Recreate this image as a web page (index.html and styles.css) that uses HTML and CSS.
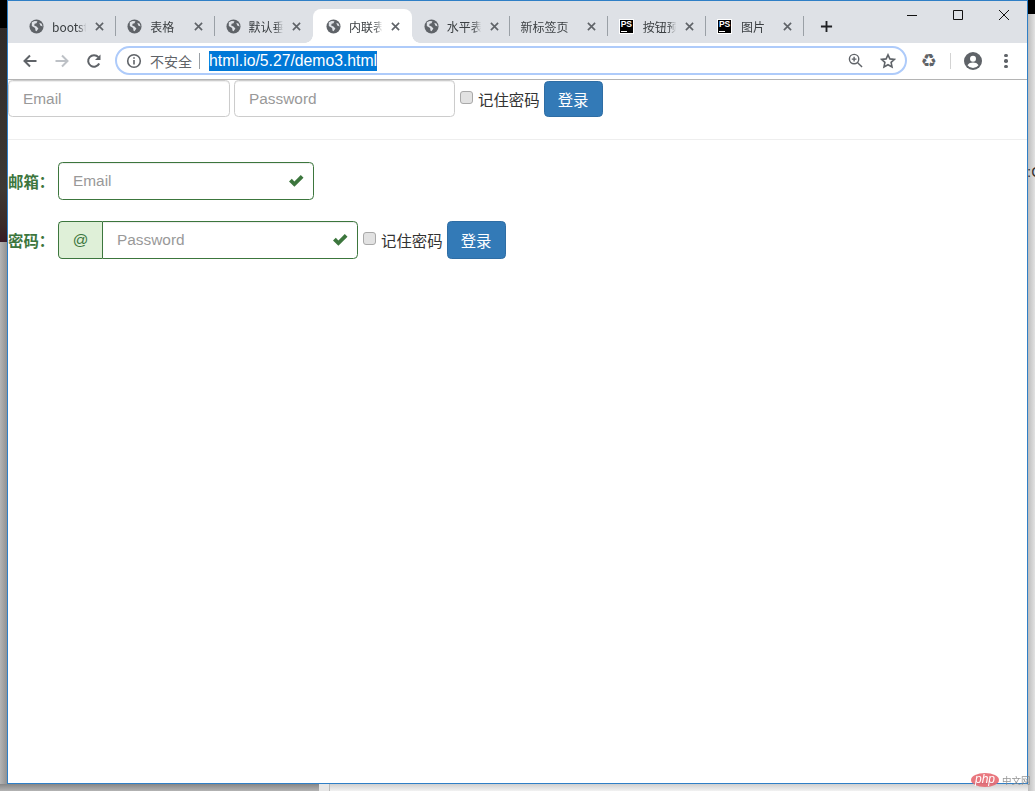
FILE: index.html
```html
<!DOCTYPE html>
<html lang="zh">
<head>
<meta charset="utf-8">
<title>内联表单</title>
<link rel="stylesheet" href="styles.css">
</head>
<body>
<div class="desktop">
  <div class="bg-left"><div class="bg-black"></div><div class="bg-brown"></div><div class="bg-grey"></div></div>
  <div class="bg-bottom"><div class="bb-dark"></div><div class="bb-line"></div><div class="bb-light"></div></div>
  <div class="bg-right"><div class="bg-right-top"></div><span class="bg-text">:C</span></div>
  <div class="window">
    <header class="tabstrip">
      <div class="tab"><svg class="fav" viewBox="0 0 16 16"><use href="#globe"/></svg><span class="tab-title">bootstrap</span><span class="tab-x"><svg viewBox="0 0 10 10"><use href="#x"/></svg></span></div>
      <i class="sep"></i>
      <div class="tab"><svg class="fav" viewBox="0 0 16 16"><use href="#globe"/></svg><span class="tab-title">表格</span><span class="tab-x"><svg viewBox="0 0 10 10"><use href="#x"/></svg></span></div>
      <i class="sep"></i>
      <div class="tab"><svg class="fav" viewBox="0 0 16 16"><use href="#globe"/></svg><span class="tab-title">默认垂直表单</span><span class="tab-x"><svg viewBox="0 0 10 10"><use href="#x"/></svg></span></div>
      <i class="sep hidden"></i>
      <div class="tab active"><svg class="fav" viewBox="0 0 16 16"><use href="#globe"/></svg><span class="tab-title">内联表单</span><span class="tab-x"><svg viewBox="0 0 10 10"><use href="#x"/></svg></span></div>
      <i class="sep hidden"></i>
      <div class="tab shift"><svg class="fav" viewBox="0 0 16 16"><use href="#globe"/></svg><span class="tab-title">水平表单</span><span class="tab-x"><svg viewBox="0 0 10 10"><use href="#x"/></svg></span></div>
      <i class="sep"></i>
      <div class="tab"><span class="tab-title">新标签页</span><span class="tab-x"><svg viewBox="0 0 10 10"><use href="#x"/></svg></span></div>
      <i class="sep"></i>
      <div class="tab"><span class="ps"><b>PS</b><u></u></span><span class="tab-title">按钮预览</span><span class="tab-x"><svg viewBox="0 0 10 10"><use href="#x"/></svg></span></div>
      <i class="sep"></i>
      <div class="tab"><span class="ps"><b>PS</b><u></u></span><span class="tab-title">图片</span><span class="tab-x"><svg viewBox="0 0 10 10"><use href="#x"/></svg></span></div>
      <i class="sep"></i>
      <svg class="newtab" viewBox="0 0 14 14"><path d="M7 1v12M1 7h12"/></svg>
      <div class="winbtns">
        <svg viewBox="0 0 12 12"><path d="M1 6.500h10"/></svg>
        <svg viewBox="0 0 12 12"><path d="M1.500 1.500h9v9h-9z"/></svg>
        <svg viewBox="0 0 12 12"><path d="M1 1l10 10M11 1L1 11"/></svg>
      </div>
    </header>
    <nav class="toolbar">
      <svg class="nav-ic" viewBox="0 0 16 16"><path d="M14.500 8H2.500M8 2.500L2.500 8 8 13.500"/></svg>
      <svg class="nav-ic off" viewBox="0 0 16 16"><path d="M1.500 8h12M8 2.500L13.500 8 8 13.500"/></svg>
      <svg class="nav-ic" viewBox="0 0 16 16"><path d="M13.200 10.500A5.800 5.800 0 1 1 12.400 4.200"/><path class="solid" d="M14.500 1.500v5.500H9z"/></svg>
      <div class="omnibox">
        <svg class="info" viewBox="0 0 16 16"><circle cx="8" cy="8" r="6.300"/><path d="M8 7v4.500M8 4.300v1.500"/></svg>
        <span class="insecure">不安全</span>
        <i class="omni-sep"></i>
        <span class="url">html.io/5.27/demo3.html</span>
        <svg class="zoom-ic" viewBox="0 0 16 16"><circle cx="6.500" cy="6.500" r="5"/><path d="M10.300 10.300L15 15M6.500 4v5M4 6.500h5"/></svg>
        <svg class="star" viewBox="0 0 16 16"><path d="M8 1.800l1.900 4.100 4.500.5-3.300 3 .9 4.500L8 11.700l-4 2.200.9-4.500-3.300-3 4.500-.5z"/></svg>
      </div>
      <span class="recycle">♻</span>
      <i class="tool-sep"></i>
      <svg class="avatar" viewBox="0 0 18 18"><circle class="solid" cx="9" cy="9" r="9"/><circle class="cut" cx="9" cy="6.800" r="3"/><path class="cut" d="M3.500 13.200c1-2 3.400-2.700 5.500-2.700s4.500.7 5.500 2.700A7 7 0 0 1 9 16a7 7 0 0 1-5.500-2.800z"/></svg>
      <span class="dots"><i></i><i></i><i></i></span>
    </nav>
    <main class="page">
      <form class="form-inline">
        <input class="control c-email" type="text" placeholder="Email">
        <input class="control c-pass" type="password" placeholder="Password">
        <label class="check"><input type="checkbox"><span>记住密码</span></label>
        <button class="btn" type="button">登录</button>
      </form>
      <hr class="rule">
      <form class="stacked">
        <div class="row">
          <label class="lbl">邮箱：</label>
          <div class="fb ok-email">
            <input class="control ok" type="text" placeholder="Email">
            <svg class="tick" viewBox="0 0 16 14"><path d="M1 7.500l2.800-2.700 2.600 2.600L12.800 1 15.500 3.700 6.400 12.800z"/></svg>
          </div>
        </div>
        <div class="row">
          <label class="lbl">密码：</label>
          <div class="fb group">
            <span class="addon">@</span>
            <input class="control ok joined" type="password" placeholder="Password">
            <svg class="tick" viewBox="0 0 16 14"><path d="M1 7.500l2.800-2.700 2.600 2.600L12.800 1 15.500 3.700 6.400 12.800z"/></svg>
          </div>
          <label class="check"><input type="checkbox"><span>记住密码</span></label>
          <button class="btn tall" type="button">登录</button>
        </div>
      </form>
    </main>
  </div>
  <div class="watermark"><span class="php">php</span><span class="cn">中文网</span></div>
</div>
<svg class="defs" aria-hidden="true">
  <symbol id="globe" viewBox="0 0 16 16"><circle cx="8" cy="8" r="7.500" fill="#5f6368"/><path fill="#dee1e6" d="M3 3.500l3-1.500 3 .5-1 2-2 .5-.5 2 2.500 1 2 2-2 3-1-.5-.5-3L3 7.500zM11 4l2.500 1 1 3-2.500-1z"/></symbol>
  <symbol id="x" viewBox="0 0 10 10"><path d="M1 1l8 8M9 1L1 9" stroke="#5f6368" stroke-width="1.800" fill="none"/></symbol>
</svg>
</body>
</html>
```
FILE: styles.css
```css
* { box-sizing: border-box; }
html, body { margin: 0; padding: 0; width: 1035px; height: 791px; overflow: hidden; background: #e9e9e9; }
body { font-family: "Liberation Sans", "Noto Sans CJK SC", sans-serif; color: #333; }
.defs { width: 0; height: 0; position: absolute; }
.desktop { position: relative; width: 1035px; height: 791px; overflow: hidden; background: #ececec; }

.bg-left { position: absolute; left: 0; top: 0; width: 8px; height: 791px; display: flex; flex-direction: column; }
.bg-black { height: 28px; background: #000; }
.bg-brown { height: 214px; background: linear-gradient(#302b29, #3d3833 75%, #3a2a28 92%, #3a1a26); }
.bg-grey { flex: 1; background: linear-gradient(90deg, #b4b4b4, #8c8c8c); }
.bg-bottom { position: absolute; left: 0; top: 784px; width: 1035px; height: 7px; display: flex; }
.bb-dark { width: 319px; background: linear-gradient(#868686, #b4b4b4); }
.bb-line { width: 11px; background: #e6e6e6; border-right: 1px solid #bbb; }
.bb-light { flex: 1; background: linear-gradient(#cfcfcf, #f2f2f2); }
.bg-right { position: absolute; left: 1028px; top: 0; width: 7px; height: 791px; background: linear-gradient(90deg, #bdbdbd, #e2e2e2); }
.bg-right-top { height: 14px; background: #000; }
.bg-text { position: absolute; left: -1px; top: 163px; font-size: 15px; color: #333; }

.window { position: absolute; left: 7px; top: 0; width: 1021px; height: 784px; border: 1px solid #2f7fc6; background: #fff; display: flex; flex-direction: column; }

.tabstrip { height: 42px; flex: none; background: #dee1e6; display: flex; align-items: center; padding: 8px 0 0 11px; position: relative; }
.tab { width: 95.300px; height: 34px; flex: none; display: flex; align-items: center; padding: 0 10px; font-size: 12px; color: #3c4043; font-family: "Noto Sans CJK SC", "Liberation Sans", sans-serif; position: relative; }
.tab.active { background: #fff; width: 98.700px; margin: 0 -2.800px 0 -0.600px; padding: 0 12px 0 12.700px; border-radius: 8px 8px 0 0; }
.tab.active::before, .tab.active::after { content: ""; position: absolute; bottom: 0; width: 8px; height: 8px; }
.tab.active::before { left: -8px; background: radial-gradient(circle at 0 0, #dee1e6 7.500px, #fff 8px); }
.tab.active::after { right: -8px; background: radial-gradient(circle at 100% 0, #dee1e6 7.500px, #fff 8px); }
.tab.shift { padding: 0 8.500px 0 11.500px; margin-right: .2px; }
.tab.shift + .sep + .tab { margin-left: -.2px; }
.fav { width: 15px; height: 15px; flex: none; margin-right: 8px; }
.ps { width: 15px; height: 15px; flex: none; margin-right: 9px; background: #000; border: 1px solid #fff; color: #fff; position: relative; display: block; overflow: hidden; }
.ps b { position: absolute; left: 1px; top: 0; font: bold 8.500px/9px "Liberation Sans", sans-serif; letter-spacing: -.3px; }
.ps u { position: absolute; left: 1px; bottom: 1px; width: 6px; height: 1px; background: #fff; }
.tab-title { flex: 1; min-width: 0; white-space: nowrap; overflow: hidden; -webkit-mask-image: linear-gradient(90deg, #000 75%, transparent 98%); mask-image: linear-gradient(90deg, #000 75%, transparent 98%); }
.tab-x { width: 9px; height: 9px; flex: none; margin-left: 8px; display: block; }
.tab-x svg { display: block; width: 9px; height: 9px; }
.sep { width: 1px; height: 20px; flex: none; margin: 0 1px; background: #9aa0a6; display: block; }
.sep.hidden { background: transparent; }
.newtab { width: 13px; height: 13px; flex: none; margin-left: 15px; fill: none; stroke: #202124; stroke-width: 2; }
.winbtns { position: absolute; right: 0; top: 0; display: flex; }
.winbtns svg { width: 46px; height: 29px; padding: 8px 17px 9px; fill: none; stroke: #111; stroke-width: 1; overflow: visible; }

.toolbar { height: 37px; flex: none; background: #fff; border-bottom: 1px solid #b4b4b4; display: flex; align-items: center; padding: 0 0 1px 14px; }
.nav-ic { width: 16px; height: 16px; flex: none; margin: 1px 16px 0 0; fill: none; stroke: #5f6368; stroke-width: 2; }
.nav-ic.off { stroke: #bdc1c6; }
.nav-ic:nth-child(3) { margin-right: 13px; }
.nav-ic .solid { fill: #5f6368; stroke: none; }
.omnibox { width: 792px; height: 29px; flex: none; border: 2px solid #aecbfa; border-radius: 15px; display: flex; align-items: center; padding: 0 9px; background: #fff; font-family: "Noto Sans CJK SC", "Liberation Sans", sans-serif; }
.info { width: 16px; height: 16px; flex: none; fill: none; stroke: #5f6368; stroke-width: 1.600; margin-right: 8px; }
.insecure { font-size: 14px; color: #5f6368; white-space: nowrap; }
.omni-sep { width: 1px; height: 16px; flex: none; background: #9aa0a6; margin: 0 9px 0 7px; }
.url { font: 15.750px/20px "Liberation Sans", sans-serif; background: #0078d7; color: #fff; white-space: nowrap; margin-top: 1px; }
.zoom-ic { width: 15px; height: 15px; flex: none; margin-left: auto; fill: none; stroke: #5f6368; stroke-width: 1.500; }
.star { width: 16px; height: 16px; flex: none; margin-left: 17px; fill: none; stroke: #5f6368; stroke-width: 1.600; }
.recycle { width: 17px; height: 18px; flex: none; margin: 1px 0 0 13px; display: flex; align-items: center; justify-content: center; font: 18px/18px "DejaVu Sans", sans-serif; color: #5f6368; }
.tool-sep { width: 1px; height: 16px; flex: none; background: #d3d3d3; margin: 1px 13px 0; }
.avatar { width: 18px; height: 18px; flex: none; margin-top: 1px; }
.avatar .solid { fill: #5f6368; }
.avatar .cut { fill: #fff; }
.dots { display: flex; flex-direction: column; gap: 2px; margin: 1px 0 0 22px; flex: none; }
.dots i { width: 3.500px; height: 3.500px; border-radius: 50%; background: #5f6368; display: block; }

.page { flex: 1; background: #fff; font-size: 15.400px; line-height: 22px; overflow: hidden; }
.form-inline { display: flex; align-items: center; }
.control { height: 37.400px; padding: 6.600px 13.200px 6.600px 14px; font: 15.400px/22px "Liberation Sans", sans-serif; color: #555; background: #fff; border: 1px solid #ccc; border-radius: 4.400px; box-shadow: inset 0 1px 1px rgba(0,0,0,.075); outline: 0; }
.control::placeholder { color: #999; opacity: 1; }
.c-email { width: 222px; margin-right: 4px; }
.c-pass { width: 221px; }
.check { display: flex; align-items: center; margin: 0 4px 0 5px; white-space: nowrap; font-family: "Noto Sans CJK SC", "Liberation Sans", sans-serif; font-size: 15.400px; line-height: 22px; }
.check input { appearance: none; -webkit-appearance: none; width: 13px; height: 13px; margin: 0 5px 3px 0; flex: none; background: #e2e2e2; border: 1px solid #a9a9a9; border-radius: 3px; }
.btn { height: 36.400px; width: 59px; padding: 0; align-self: flex-end; font: 15.400px/22px "Noto Sans CJK SC", "Liberation Sans", sans-serif; color: #fff; background: #337ab7; border: 1px solid #2e6da4; border-radius: 4.400px; }
.btn.tall { height: 37.400px; }
.rule { height: 0; margin: 22px 0 22px; border: 0; border-top: 1px solid #eee; }
.stacked { display: flex; flex-direction: column; gap: 21.600px; }
.row { display: flex; align-items: center; }
.lbl { width: 50px; flex: none; padding-bottom: 1px; font: bold 15.400px/22px "Noto Sans CJK SC", sans-serif; color: #3c763d; white-space: nowrap; overflow: visible; }
.fb { position: relative; flex: none; }
.ok-email { width: 256px; }
.ok-email .control { width: 100%; display: block; }
.control.ok { border-color: #3c763d; }
.group { width: 300px; display: flex; }
.addon { width: 44px; flex: none; display: flex; align-items: center; justify-content: center; color: #3c763d; background: #dff0d8; border: 1px solid #3c763d; border-right: 0; border-radius: 4.400px 0 0 4.400px; font-size: 15.400px; }
.control.joined { flex: 1; min-width: 0; border-radius: 0 4.400px 4.400px 0; }
.tick { position: absolute; right: 10px; top: 12px; width: 16px; height: 14px; fill: #3c763d; }

.watermark { position: absolute; left: 971px; top: 773px; display: flex; align-items: center; opacity: .9; }
.php { width: 28px; height: 14px; border-radius: 50%; background: #e76a72; color: #fff; font: italic 12px/13px "Liberation Sans", sans-serif; text-align: center; display: block; }
.cn { font: 9.500px/14px "Noto Sans CJK SC", sans-serif; color: #8a8a8a; margin-left: 3px; white-space: nowrap; }
```
